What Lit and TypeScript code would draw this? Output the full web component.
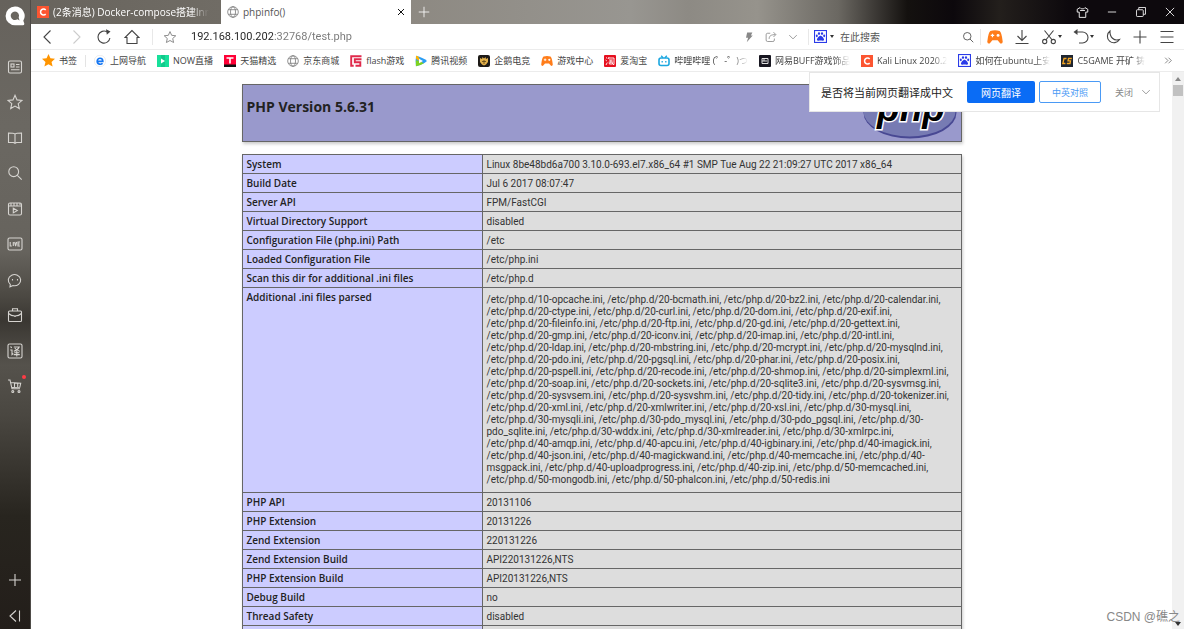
import { LitElement, html, css, svg, TemplateResult } from "lit";
import { customElement } from "lit/decorators.js";
import { classMap } from "lit/directives/class-map.js";

type Icon = TemplateResult;

const line = (body: unknown, size = 16): Icon => html`
  <svg class="line" width=${size} height=${size} viewBox="0 0 16 16" aria-hidden="true">${body}</svg>`;

const side = {
  news: line(svg`<rect x="1.5" y="2" width="13" height="12" rx="1.5"/><rect x="4" y="5" width="3" height="3"/><path d="M9 5.5h3.5M9 8h3.5M4 10.8h8.5"/>`),
  star: line(svg`<path d="M8 1.3l2 4.6 5 .5-3.800 3.300 1.100 4.900L8 12.100l-4.300 2.500 1.100-4.900L1 6.400l5-.5z"/>`),
  book: line(svg`<path d="M8 4C7 3 5.500 3 1.500 3v9.500H6.500L8 13.300l1.500-.8h5V3C10.500 3 9 3 8 4zM8 4v9"/>`),
  search: line(svg`<circle cx="6.700" cy="6.700" r="4.900"/><path d="M10.300 10.300l4.400 4.400"/>`),
  video: line(svg`<rect x="1.500" y="2" width="13" height="12" rx="1.500"/><path d="M1.500 5h13M4 2v3M7 2v3M10 2v3M13 2v2M6.300 7.300v4.600l4-2.300z"/>`),
  live: line(svg`<rect x="1" y="2" width="14" height="12" rx="1.500"/><path d="M3.200 6v4h1.600M6.300 6v4M7.600 6l1 4 1-4M13 6h-2v4h2M11 8h1.700"/>`),
  chat: line(svg`<path d="M3.300 12.300A6.200 5.600 0 1 1 6 13.600L3 14.800z"/><path d="M5.500 7v1.500M10.500 7v1.500"/>`),
  bag: line(svg`<rect x="1.500" y="4" width="13" height="10.500" rx="1"/><path d="M5.500 4V1.800h5V4M1.500 6.500C5 9.800 11 9.800 14.500 6.500M7.300 9.500h1.400"/>`),
  trans: line(svg`<rect x="1" y="1" width="14" height="14" rx="1.500"/><path d="M3.500 3.500l1.300 1.300M3.200 7h1.800v4.600l1.300-1.100M6.800 4h5.400C11 6.600 9 7.800 6.800 8.200M7.800 5c1.300 1.700 3 2.700 5 3.200M9.800 8v5.500M7.300 9.800h5M6.800 11.600h6"/>`),
  cart: line(svg`<path d="M1 2h2l2 8.800h8M3.800 4.500l9.900.8-.9 4-8 .2M7.500 5v4.500M10.700 5.200v4"/><circle cx="5.800" cy="13.500" r="1"/><circle cx="12" cy="13.500" r="1"/>`),
  plus: line(svg`<path d="M8 2v12M2 8h12"/>`),
  collapse: line(svg`<path d="M9 2.500L3 8l6 5.500M12.500 2.500v11"/>`),
};

const bar = {
  back: line(svg`<path d="M10.500 1.500L4 8l6.500 6.500"/>`),
  forward: line(svg`<path d="M5.500 1.500L12 8l-6.500 6.500"/>`),
  reload: line(svg`<path d="M13.900 9A6 6 0 1 1 11 2.900"/><path class="solid" d="M10 .3l4.500 2.200-3.700 3.300z"/>`),
  home: line(svg`<path d="M8 1.500L1 8.500h2V14.500h10V8.500h2z"/>`),
  star: line(svg`<path d="M8 1.800l1.900 4.300 4.700.5-3.500 3.100 1 4.600L8 12l-4.100 2.300 1-4.600-3.500-3.100 4.700-.5z"/>`, 14),
  bolt: line(svg`<path class="solid" d="M5.500 2h7l-2 4h2.500L5 15l1.800-6H4z"/>`, 12),
  share: line(svg`<path d="M7 3H3.500Q1.500 3 1.500 5v7q0 2 2 2h7q2 0 2-2v-2M5.500 10.500C5.500 6.500 8 4.800 14 4.800M11.300 1.500l3.200 3.300-3.200 3.200"/>`, 12),
  down: line(svg`<path d="M3 5.500l5 5 5-5"/>`, 12),
  search: line(svg`<circle cx="7" cy="7" r="5"/><path d="M10.700 10.700l4.300 4.300"/>`, 12),
  download: line(svg`<path d="M8 1v10.500M3.500 7L8 11.500 12.500 7M1.500 14.500h13"/>`),
  scissors: line(svg`<path d="M3.500 1.500l7.700 9.500M12.500 1.500L4.800 11"/><circle cx="3.700" cy="12.500" r="2.100"/><circle cx="12.300" cy="12.500" r="2.100"/>`),
  undo: line(svg`<path d="M2 3h7.500a5.500 5.500 0 0 1 0 11H6"/><path class="solid" d="M4.500 0v6L.5 3z"/>`),
  moon: line(svg`<path d="M5 2a6.500 6.500 0 1 0 9.500 8.500C9 12.500 4.500 8 5 2z"/>`),
  plus: line(svg`<path d="M8 1.500v13M1.500 8h13"/>`),
  menu: line(svg`<path d="M1.500 2.500h13M1.500 8h13M1.500 13.500h13"/>`),
  shirt: line(svg`<path d="M5 2L1.500 4v3.500H4V14h8V7.500h2.500V4L11 2 9.500 3.500h-3zM5 5.500h6"/>`, 13),
  min: line(svg`<path d="M2.500 8h11"/>`, 12),
  restore: line(svg`<rect x="2" y="5" width="9" height="9" rx="1"/><path d="M5 5V2h9v9h-3"/>`, 12),
  close: line(svg`<path d="M2.500 2.500l11 11M13.500 2.500l-11 11"/>`, 12),
};

const pic = (body: unknown, size = 12): Icon => html`
  <svg width=${size} height=${size} viewBox="0 0 12 12" aria-hidden="true">${body}</svg>`;

const cMark = pic(svg`<rect width="12" height="12" fill="#fc5531"/><path d="M8.700 3.900A3 3 0 1 0 8.700 8.100" fill="none" stroke="#fff" stroke-width="1.500"/>`);
const globe = pic(svg`<g fill="none" stroke="#777" stroke-width=".8"><circle cx="6" cy="6" r="5.300"/><ellipse cx="6" cy="6" rx="2.500" ry="5.300"/><path d="M1.500 3.700h9M1.500 8.300h9"/></g>`);
const paw = pic(svg`<rect x=".5" y=".5" width="11" height="11" fill="#fff" stroke="#2a3be8"/><g fill="#2a3be8"><ellipse cx="4.600" cy="3.300" rx="1" ry="1.300"/><ellipse cx="7.400" cy="3.300" rx="1" ry="1.300"/><ellipse cx="2.600" cy="5.400" rx=".9" ry="1.200"/><ellipse cx="9.400" cy="5.400" rx=".9" ry="1.200"/><path d="M6 5.200C7.300 5.200 9.500 7.800 9.300 9 9 10.400 7.300 9.800 6 9.800s-3 .6-3.300-.8C2.500 7.800 4.700 5.200 6 5.200z"/></g>`, 13);
const pad = (size: number) => pic(svg`<path d="M2.500 1.500Q6 .3 9.500 1.500 11 2.500 11.800 9.500 11.500 11.300 10 10.800L8 8.500H4L2 10.800Q.5 11.300.2 9.500 1 2.500 2.500 1.500z" fill="#ff7d1a"/><path d="M2.800 4.800h2.600M4.100 3.500v2.600" stroke="#fff" stroke-width=".9"/><circle cx="8.300" cy="4.800" r="1.100" fill="#fff"/>`, size);

interface Mark { icon: Icon; text: string; fade?: boolean }

const marks: Mark[] = [
  { icon: pic(svg`<circle cx="6" cy="6" r="5.700" fill="#fff" stroke="#ddd" stroke-width=".5"/><path d="M3.200 6.300h5.600C8.800 2.200 3.200 2.200 3.200 6.300c0 3.300 3.900 3.600 5.300 1.900" fill="none" stroke="#1677f2" stroke-width="1.700"/>`), text: "上网导航" },
  { icon: pic(svg`<path d="M0 0h4l4 4V0h4v12H8L4 8v4H0z" fill="#17e09a"/><path d="M4 0h4v12H4z" fill="#12c98b"/><path d="M4 3.500v5L8 6z" fill="#fff"/>`), text: "NOW直播" },
  { icon: pic(svg`<rect width="12" height="12" fill="#ff0036"/><path d="M0 9.500h12V12H0z" fill="#111"/><path d="M2.500 3h7M6 3v5.500" stroke="#fff" stroke-width="1.600"/>`), text: "天猫精选" },
  { icon: globe, text: "京东商城" },
  { icon: pic(svg`<path d="M11.500 1.200H1.200v9.600h2.500M11.500 4.300H4.800v3h5.500v3.500H5.500" fill="none" stroke="#e02a4b" stroke-width="1.900"/>`), text: "flash游戏" },
  { icon: pic(svg`<path d="M1 .8Q.3 6 1 11.200 8 9.500 12 6 8 2.500 1 .8z" fill="#2a9df4"/><path d="M.9 5v6.200Q6 10 9 8.200z" fill="#7ed321"/><path d="M1 .8v3L7 8 3 1.300z" fill="#ffb400"/><path d="M4 3.800v4.400L8 6z" fill="#fff"/>`), text: "腾讯视频" },
  { icon: pic(svg`<rect width="12" height="12" rx="2" fill="#1d1a17"/><path d="M2 3l2 1 .5-2L6 3.500 7.500 2 8 4l2-1v4L8 9.500 6 10.500 4 9.500 2 7z" fill="#e2b04a"/><path d="M4 6.500l4 0M6 5v4" stroke="#5b4315" stroke-width=".8"/>`), text: "企鹅电竞" },
  { icon: pad(12), text: "游戏中心" },
  { icon: pic(svg`<rect width="12" height="12" rx="1" fill="#e60f1e"/><path d="M2 2.500l1.200.9M1.600 5l1.200.9M2 10l1.300-2.500M5 2L4.200 4M5 3h5v6.500H8.800M5 5h3.800M4.700 7h4.500M6.900 5v3.500M5.300 7.500v1.500h3.200V7.500" fill="none" stroke="#fff" stroke-width=".9"/>`), text: "爱淘宝" },
  { icon: pic(svg`<rect x="1" y="3" width="10" height="7.500" rx="2" fill="none" stroke="#1ba7e0" stroke-width="1.600"/><path d="M3.200.8L5 2.800M8.800.8L7 2.800M4.200 6v1.500M7.800 6v1.500" stroke="#1ba7e0" stroke-width="1.300"/>`), text: "哔哩哔哩 (゜-゜)つ", fade: true },
  { icon: pic(svg`<rect width="12" height="12" rx="1" fill="#171620"/><path d="M3 3.500h6v5H3zM3 6h5M5 3.500v2.500" fill="none" stroke="#ddd" stroke-width="1"/>`), text: "网易BUFF游戏饰品", fade: true },
  { icon: cMark, text: "Kali Linux 2020.2", fade: true },
  { icon: paw, text: "如何在ubuntu上安", fade: true },
  { icon: pic(svg`<rect width="12" height="12" fill="#1e2530"/><path d="M5.500 3.500H3L1.800 8.500h2.600M10.800 3.500H7.500L7 5.800h2.500L9 8.500H5.800" fill="none" stroke="#f5a623" stroke-width="1.300"/>`), text: "C5GAME 开矿 铸", fade: true },
];

const iniFiles = [
  "10-opcache", "20-bcmath", "20-bz2", "20-calendar", "20-ctype", "20-curl", "20-dom", "20-exif",
  "20-fileinfo", "20-ftp", "20-gd", "20-gettext", "20-gmp", "20-iconv", "20-imap", "20-intl",
  "20-ldap", "20-mbstring", "20-mcrypt", "20-mysqlnd", "20-pdo", "20-pgsql", "20-phar", "20-posix",
  "20-pspell", "20-recode", "20-shmop", "20-simplexml", "20-soap", "20-sockets", "20-sqlite3", "20-sysvmsg",
  "20-sysvsem", "20-sysvshm", "20-tidy", "20-tokenizer", "20-xml", "20-xmlwriter", "20-xsl", "30-mysql",
  "30-mysqli", "30-pdo_mysql", "30-pdo_pgsql", "30-pdo_sqlite", "30-wddx", "30-xmlreader", "30-xmlrpc",
  "40-amqp", "40-apcu", "40-igbinary", "40-imagick", "40-json", "40-magickwand", "40-memcache", "40-msgpack",
  "40-uploadprogress", "40-zip", "50-memcached", "50-mongodb", "50-phalcon", "50-redis",
];

const rows: [string, string][] = [
  ["System", "Linux 8be48bd6a700 3.10.0-693.el7.x86_64 #1 SMP Tue Aug 22 21:09:27 UTC 2017 x86_64"],
  ["Build Date", "Jul 6 2017 08:07:47"],
  ["Server API", "FPM/FastCGI"],
  ["Virtual Directory Support", "disabled"],
  ["Configuration File (php.ini) Path", "/etc"],
  ["Loaded Configuration File", "/etc/php.ini"],
  ["Scan this dir for additional .ini files", "/etc/php.d"],
  ["Additional .ini files parsed", iniFiles.map((f) => `/etc/php.d/${f}.ini`).join(", ")],
  ["PHP API", "20131106"],
  ["PHP Extension", "20131226"],
  ["Zend Extension", "220131226"],
  ["Zend Extension Build", "API220131226,NTS"],
  ["PHP Extension Build", "API20131226,NTS"],
  ["Debug Build", "no"],
  ["Thread Safety", "disabled"],
  ["Zend Signal Handling", "disabled"],
];

const reset = css`
  :host, * { box-sizing: border-box; }
  button, input { font: inherit; color: inherit; border: 0; padding: 0; margin: 0; background: none; }
  button { display: flex; align-items: center; justify-content: center; }
  svg { display: block; flex: none; }
  .line { fill: none; stroke: currentColor; stroke-width: 1.1; }
  .solid { fill: currentColor; stroke: none; }
`;

@customElement("side-bar")
class SideBar extends LitElement {
  static styles = [reset, css`
    :host { display: flex; flex-direction: column; align-items: center; padding-top: 6px; color: #d6d4d0;
      background: linear-gradient(#66625c 0, #6b6862 20%, #66635d 40%, #4c4943 47%, #3a3732 51%, #55524c 58%, #4a4741 66%, #28251f 82%, #231e1a 100%);
      border-right: 1px solid #4e4b47; }
    .logo { margin-bottom: 33px; }
    nav { display: flex; flex-direction: column; gap: 20px; }
    .pair { display: flex; flex-direction: column; gap: 19px; }
    .foot { margin-top: auto; display: flex; flex-direction: column; gap: 20px; padding-bottom: 5px; }
    .hot { position: relative; }
    .hot::after { content: ""; position: absolute; right: -3px; top: -3px; width: 4px; height: 4px; border-radius: 50%; background: #ff3b45; }
  `];
  render() {
    const groups: [string, Icon][][] = [
      [["新闻", side.news], ["收藏", side.star]],
      [["阅读", side.book], ["搜索", side.search]],
      [["视频", side.video], ["直播", side.live]],
      [["聊天", side.chat], ["工具", side.bag]],
      [["翻译", side.trans], ["购物", side.cart]],
    ];
    return html`
      <svg class="logo" width="20" height="20" viewBox="0 0 20 20" aria-hidden="true">
        <path d="M10 .5a9.400 9.400 0 1 0 0 18.800h7.800q2 0 1.400-2l-.9-2.600A9.400 9.400 0 0 0 10 .5z" fill="#fff"/>
        <path d="M10 5.500a4.300 4.300 0 1 0 2.500 7.800l2 1.200-.8-3A4.300 4.300 0 0 0 10 5.500z" fill="#6a665f"/>
      </svg>
      <nav>${groups.map((g) => html`<div class="pair">${g.map(([name, icon]) => html`
        <button class=${classMap({ hot: name === "购物" })} aria-label=${name}>${icon}</button>`)}</div>`)}</nav>
      <div class="foot">
        <button aria-label="添加">${side.plus}</button>
        <button aria-label="收起">${side.collapse}</button>
      </div>`;
  }
}

@customElement("tab-strip")
class TabStrip extends LitElement {
  static styles = [reset, css`
    :host { display: flex; height: 24px; font-size: 10px; color: #fff;
      background: linear-gradient(90deg, #68645d 0, #706c65 190px, #8d8982 380px, #989691 52%, #8d8a84 57%, #96938c 63%, #6b6862 70%, #14110f 76%, #0c080c 80%, #231f1c 84%, #0d090d 90%); }
    .tab { display: flex; align-items: center; gap: 4px; width: 190px; padding: 0 6px; }
    .tab span { flex: 1; overflow: hidden; white-space: nowrap; line-height: 24px; }
    .idle span { -webkit-mask-image: linear-gradient(90deg, #000 88%, transparent); mask-image: linear-gradient(90deg, #000 88%, transparent); }
    .idle { padding-right: 12px; }
    .active { background: #fff; color: #555; }
    .active button { color: #111; }
    .new { padding: 0 7px; }
    .window { display: flex; gap: 17px; margin-left: auto; padding-right: 8px; }
  `];
  render() {
    return html`
      <div class="tab idle">${cMark}<span>(2条消息) Docker-compose搭建lnm</span></div>
      <div class="tab active">${globe}<span>phpinfo()</span><button aria-label="关闭标签">${line(svg`<path d="M2 2l12 12M14 2L2 14" stroke-width="2"/>`, 8)}</button></div>
      <button class="new" aria-label="新标签">${line(svg`<path d="M8 1v14M1 8h14"/>`, 12)}</button>
      <div class="window">
        <button aria-label="皮肤">${bar.shirt}</button>
        <button aria-label="最小化">${bar.min}</button>
        <button aria-label="还原">${bar.restore}</button>
        <button aria-label="关闭">${bar.close}</button>
      </div>`;
  }
}

@customElement("tool-bar")
class ToolBar extends LitElement {
  static styles = [reset, css`
    :host { display: flex; align-items: center; height: 26px; padding: 0 9px; color: #444; border-bottom: 1px solid #ececec; }
    .nav, .tools { display: flex; align-items: center; gap: 12px; }
    .off { color: #ccc; }
    .rule { width: 1px; height: 16px; background: #e8e8e8; }
    .fav { margin: 0 14px 0 10px; color: #888; }
    .url { flex: 1; min-width: 0; font: 11px/16px Roboto, sans-serif; color: transparent;
      background: linear-gradient(90deg, #222 82px, #777 82px); background-clip: text; -webkit-background-clip: text; }
    .quick { display: flex; gap: 10px; color: #888; margin-right: 9px; }
    .engine { display: flex; align-items: center; gap: 3px; margin: 0 6px 0 5px; }
    .caret { border: 2px solid transparent; border-top: 3px solid #333; border-bottom: 0; }
    .find { width: 122px; font-size: 10px; line-height: 16px; }
    .find::placeholder { color: #555; opacity: 1; }
    .tools { margin-left: 6px; gap: 11px; }
    .tools .rule { margin-right: -5px; }
    .drop { display: flex; gap: 1px; }
  `];
  render() {
    return html`
      <div class="nav">
        <button aria-label="后退">${bar.back}</button>
        <button class="off" aria-label="前进">${bar.forward}</button>
        <button aria-label="刷新">${bar.reload}</button>
        <button aria-label="主页">${bar.home}</button>
        <span class="rule"></span>
      </div>
      <button class="fav" aria-label="收藏此页">${bar.star}</button>
      <input class="url" aria-label="地址" value="192.168.100.202:32768/test.php" />
      <div class="quick">
        <button aria-label="极速">${bar.bolt}</button>
        <button aria-label="分享">${bar.share}</button>
        <button aria-label="更多">${bar.down}</button>
      </div>
      <span class="rule"></span>
      <button class="engine" aria-label="搜索引擎">${paw}<i class="caret"></i></button>
      <input class="find" aria-label="搜索" placeholder="在此搜索" />
      <button aria-label="搜索">${bar.search}</button>
      <div class="tools">
        <span class="rule"></span>
        <button aria-label="游戏">${pad(16)}</button>
        <button aria-label="下载">${bar.download}</button>
        <button class="drop" aria-label="截图">${bar.scissors}<i class="caret"></i></button>
        <button class="drop" aria-label="恢复">${bar.undo}<i class="caret"></i></button>
        <button aria-label="夜间">${bar.moon}</button>
        <button aria-label="扩展">${bar.plus}</button>
        <button aria-label="菜单">${bar.menu}</button>
      </div>`;
  }
}

@customElement("bookmark-bar")
class BookmarkBar extends LitElement {
  static styles = [reset, css`
    :host { display: flex; align-items: center; gap: 11px; height: 22px; padding: 0 11px; font-size: 9px; color: #444; border-bottom: 1px solid #ececec; }
    a { display: flex; align-items: center; gap: 4px; color: inherit; text-decoration: none; white-space: nowrap; line-height: 20px; }
    .rule { width: 1px; height: 12px; margin: 0 -3px; background: #e4e4e4; }
    .fade { max-width: 75px; overflow: hidden; -webkit-mask-image: linear-gradient(90deg, #000 80%, transparent); mask-image: linear-gradient(90deg, #000 80%, transparent); }
    .more { margin-left: auto; }
  `];
  render() {
    return html`
      <a href="#">${pic(svg`<path d="M6 0l1.800 4 4.200.4-3.200 2.900 1 4.300L6 9.400l-3.800 2.200 1-4.300L0 4.400 4.200 4z" fill="#ff9500"/>`, 13)}<span>书签</span></a>
      <span class="rule"></span>
      ${marks.map((m) => html`<a href="#">${m.icon}<span class=${classMap({ fade: !!m.fade })}>${m.text}</span></a>`)}
      <button class="more" aria-label="更多书签">${line(svg`<path d="M2 3l5 5-5 5M8 3l5 5-5 5"/>`, 9)}</button>`;
  }
}

@customElement("php-info")
class PhpInfo extends LitElement {
  static styles = [reset, css`
    :host { display: block; padding: 12px 20px 0; color: #222; font: 10px/12px Roboto, "Open Sans", sans-serif; }
    .info { max-width: 720px; margin: 0 auto; }
    header { display: flex; justify-content: space-between; height: 58px; padding: 1px 4px; background: #9999cc; border: 1px solid #666; box-shadow: 1px 2px 3px #ccc; }
    h1 { margin: 0; padding-top: 11px; font: bold 14px/20px "Open Sans", sans-serif; }
    table { width: 100%; margin-top: 12px; border-collapse: collapse; box-shadow: 1px 2px 3px #ccc; }
    th, td { border: 1px solid #666; padding: 3px 4px; vertical-align: top; }
    th { width: 240px; text-align: left; font: 600 10px/12px "Open Sans", sans-serif; background: #ccccff; }
    td { background: #dddddd; color: #333; padding: 4px 4px 2px; }
    .tall { padding: 6px 4px; }
  `];
  render() {
    return html`<div class="info">
      <header>
        <h1>PHP Version 5.6.31</h1>
        <svg width="94" height="53" viewBox="0 0 94 53" role="img" aria-label="PHP logo">
          <ellipse cx="47" cy="26.500" rx="46.500" ry="26" fill="#484893"/>
          <ellipse cx="46.500" cy="25.500" rx="46" ry="25" fill="#777bb3"/>
          <text x="48" y="35" text-anchor="middle" font-family="Liberation Sans" font-weight="bold" font-style="italic" font-size="37" fill="#000" stroke="#fff" stroke-width="3" paint-order="stroke">php</text>
        </svg>
      </header>
      <table>
        <tbody>${rows.map(([k, v]) => html`<tr><th scope="row">${k}</th><td class=${classMap({ tall: v.length > 200 })}>${v}</td></tr>`)}</tbody>
      </table>
    </div>`;
  }
}

@customElement("translate-bar")
class TranslateBar extends LitElement {
  static styles = [reset, css`
    :host { display: flex; align-items: center; height: 40px; padding: 0 7px 0 11px; background: #fff; border: 1px solid #e6e6e6; font-size: 9px; color: #888; }
    p { margin: 0 14px 0 0; font-size: 11px; color: #222; }
    .main, .both { height: 22px; border-radius: 2px; }
    .main { width: 68px; margin-right: 4px; background: #0a6cf5; color: #fff; font-size: 10px; }
    .both { width: 62px; margin-right: 14px; border: 1px solid #4a9af5; color: #4a9af5; }
    .close { gap: 7px; }
  `];
  render() {
    return html`
      <p>是否将当前网页翻译成中文</p>
      <button class="main">网页翻译</button>
      <button class="both">中英对照</button>
      <button class="close">关闭 ${bar.down}</button>`;
  }
}

@customElement("app-root")
class AppRoot extends LitElement {
  static styles = [reset, css`
    :host { display: grid; grid-template-columns: 31px minmax(0, 1fr); height: 100vh; overflow: hidden; background: #fff; font-family: "Open Sans", "Noto Sans CJK SC", sans-serif; }
    .browser { display: flex; flex-direction: column; min-height: 0; }
    .view { position: relative; flex: 1; min-height: 0; display: flex; }
    php-info { flex: 1; min-width: 0; overflow: hidden; }
    translate-bar { position: absolute; top: 0; right: 24px; }
    .scroll { display: flex; flex-direction: column; align-items: center; justify-content: space-between; width: 12px; padding: 5px 0 3px; background: #f1f1f1; }
    .up { border: 3px solid transparent; border-bottom: 4px solid #888; border-top: 0; }
    .thumb { width: 10px; height: 11px; margin: 4px 0 auto; background: #c1c1c1; }
    .down { border: 3px solid transparent; border-top: 4px solid #333; border-bottom: 0; }
    .mark { position: absolute; right: 4px; bottom: 4px; font: 12px/16px "Liberation Sans", "Noto Sans CJK SC", sans-serif; color: #888; }
  `];
  render() {
    return html`
      <side-bar></side-bar>
      <div class="browser">
        <tab-strip></tab-strip>
        <tool-bar></tool-bar>
        <bookmark-bar></bookmark-bar>
        <div class="view">
          <php-info></php-info>
          <div class="scroll"><i class="up"></i><i class="thumb"></i><i class="down"></i></div>
          <translate-bar></translate-bar>
          <span class="mark">CSDN @礁之</span>
        </div>
      </div>`;
  }
}
